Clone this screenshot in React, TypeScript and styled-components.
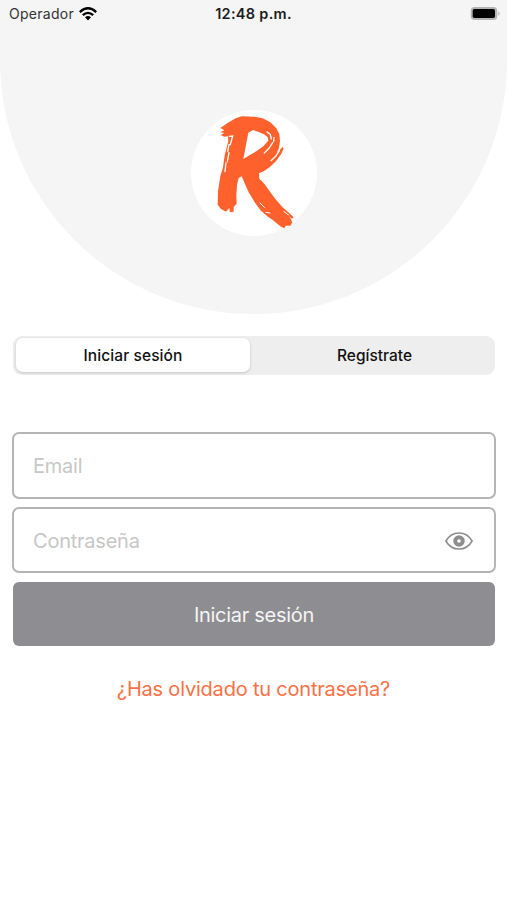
import React from "react";
import styled, { createGlobalStyle } from "styled-components";

const GlobalStyle = createGlobalStyle`
  * { box-sizing: border-box; }
  body { margin: 0; background: #fff; }
  button, input { font: inherit; letter-spacing: inherit; border: 0; margin: 0; padding: 0; background: none; }
`;

const Screen = styled.div`
  width: 507px;
  height: 900px;
  overflow: hidden;
  background: #fff;
  font-family: Inter, "Liberation Sans", sans-serif;
`;

const Header = styled.header`
  height: 314px;
  background: #f5f5f5;
  border-radius: 0 0 253.5px 253.5px;
  display: flex;
  flex-direction: column;
  align-items: center;
`;

const StatusBar = styled.div`
  width: 100%;
  height: 27px;
  padding: 0 6px 0 9px;
  display: grid;
  grid-template-columns: 1fr auto 1fr;
  align-items: center;
  color: #1c1c1c;
`;

const Carrier = styled.div`
  display: flex;
  align-items: center;
  gap: 5px;
  font-size: 14px;
  letter-spacing: 0.27px;
  color: #333;
`;

const Clock = styled.div`
  margin-right: 3px;
  font-size: 14.5px;
  font-weight: 600;
  letter-spacing: 0.3px;
`;

const BatteryIcon = styled.svg`
  justify-self: end;
`;

const LogoDisc = styled.div`
  width: 126px;
  height: 126px;
  margin-top: 83px;
  border-radius: 50%;
  background: #fff;

  svg { display: block; overflow: visible; }
`;

const Tabs = styled.div`
  height: 39px;
  margin: 22px 12px 0 13px;
  padding: 2px 0 3px 3px;
  display: grid;
  grid-template-columns: 234px 1fr;
  gap: 4px;
  border-radius: 9px;
  background: #eee;
`;

const Tab = styled.button<{ $active?: boolean }>`
  border-radius: 7px;
  background: ${(p) => (p.$active ? "#fff" : "transparent")};
  box-shadow: ${(p) => (p.$active ? "0 1px 3px rgba(0, 0, 0, 0.17)" : "none")};
  color: #111;
  font-size: 15.5px;
  font-weight: 500;
  letter-spacing: ${(p) => (p.$active ? "0.1px" : "0")};
`;

const Form = styled.form`
  margin: 57px 11px 0 12px;
  display: flex;
  flex-direction: column;
`;

const Field = styled.label`
  height: 67px;
  margin-bottom: 8px;
  padding: 1px 21px 0 19px;
  display: flex;
  align-items: center;
  border: 2px solid #b5b5b5;
  border-radius: 7px;

  & + & { height: 66px; }
`;

const Input = styled.input`
  flex: 1;
  min-width: 0;
  outline: 0;
  font-size: 20px;
  letter-spacing: -0.23px;
  &::placeholder { color: #c7c7c7; opacity: 1; }
`;

const Submit = styled.button`
  height: 64px;
  margin: 1px 1px 0;
  padding-top: 1px;
  border-radius: 6px;
  background: #8e8d92;
  color: #f5f5f5;
  font-size: 20px;
  letter-spacing: -0.28px;
`;

const ForgotLink = styled.a`
  display: block;
  margin-top: 30px;
  text-align: center;
  color: #fb7044;
  font-size: 20px;
  letter-spacing: -0.2px;
  line-height: 26px;
`;

const Logo = () => (
  <svg width="126" height="126" viewBox="32 29 378 378">
    <path
      fill="#ff612d"
      d="M120 83L143 67L166 54L184 48L222 49L247 54L270 66L288 84L297 102L299 121L296 143L289 158L302 145L306 140L310 144L303 160L288 181L268 201L250 213L236 219L237 235L252 250L270 276L287 298L306 320L320 332L340 351L334 355L327 348L336 366L330 376L316 376L312 384L300 378L280 361L261 348L242 331L224 307L205 276L194 251L184 228L175 233L170 254L168 287L169 310L160 320L160 334L149 336L147 323L137 334L122 326L112 313L113 273L120 228L128 201L133 165L144 121L143 108L132 109L121 104L132 98L120 96L132 90ZM204 97L189 176L209 164L229 152L249 138L264 121L262 110L251 102L233 94L218 89Z"
    />
    <g fill="none" stroke="#fff" strokeWidth="4" strokeLinecap="round">
      <path d="M147 108L157 107L150 133M146 132L142 154M146 157L141 184M137 188L134 214" />
      <path d="M260 95L270 102L273 116M281 111L280 123M277 127L266 144L252 158M297 151L286 168L272 181" />
      <path d="M239 308L252 321M257 336L269 338M310 333L325 344" strokeWidth="3" />
    </g>
  </svg>
);

const Wifi = () => (
  <svg width="18" height="14" viewBox="0 0 18 14">
    <g fill="none" stroke="#000" strokeWidth="2.3">
      <path d="M.8 5.1Q9-2.5 17.2 5.1" />
      <path d="M3.8 8.2Q9 3.5 14.2 8.2" />
    </g>
    <path d="M6 10.2Q9 7.9 12 10.2L9 13.5Z" />
  </svg>
);

const Battery = () => (
  <BatteryIcon width="31" height="15" viewBox="0 0 31 15">
    <rect x=".7" y=".9" width="26.6" height="13.2" rx="4" fill="#b4b4b4" />
    <rect x="2.7" y="3" width="22.3" height="9" rx="1.8" />
    <path d="M28.4 5Q31 7.4 28.4 10Z" fill="#b4b4b4" />
  </BatteryIcon>
);

const Eye = () => (
  <svg width="28" height="20" viewBox="0 0 28 20" fill="none" stroke="#8e8e8e">
    <path d="M.9 10C7-.7 21-.7 27.1 10C21 20.7 7 20.7 .9 10Z" strokeWidth="1.6" />
    <circle cx="14" cy="10" r="3.8" strokeWidth="4" />
  </svg>
);

export default function App() {
  return (
    <Screen>
      <GlobalStyle />
      <Header>
        <StatusBar>
          <Carrier>
            Operador
            <Wifi />
          </Carrier>
          <Clock>12:48 p.m.</Clock>
          <Battery />
        </StatusBar>
        <LogoDisc>
          <Logo />
        </LogoDisc>
      </Header>
      <Tabs>
        <Tab $active>Iniciar sesión</Tab>
        <Tab>Regístrate</Tab>
      </Tabs>
      <Form>
        <Field>
          <Input type="email" placeholder="Email" />
        </Field>
        <Field>
          <Input type="password" placeholder="Contraseña" />
          <Eye />
        </Field>
        <Submit type="button">Iniciar sesión</Submit>
      </Form>
      <ForgotLink>¿Has olvidado tu contraseña?</ForgotLink>
    </Screen>
  );
}
